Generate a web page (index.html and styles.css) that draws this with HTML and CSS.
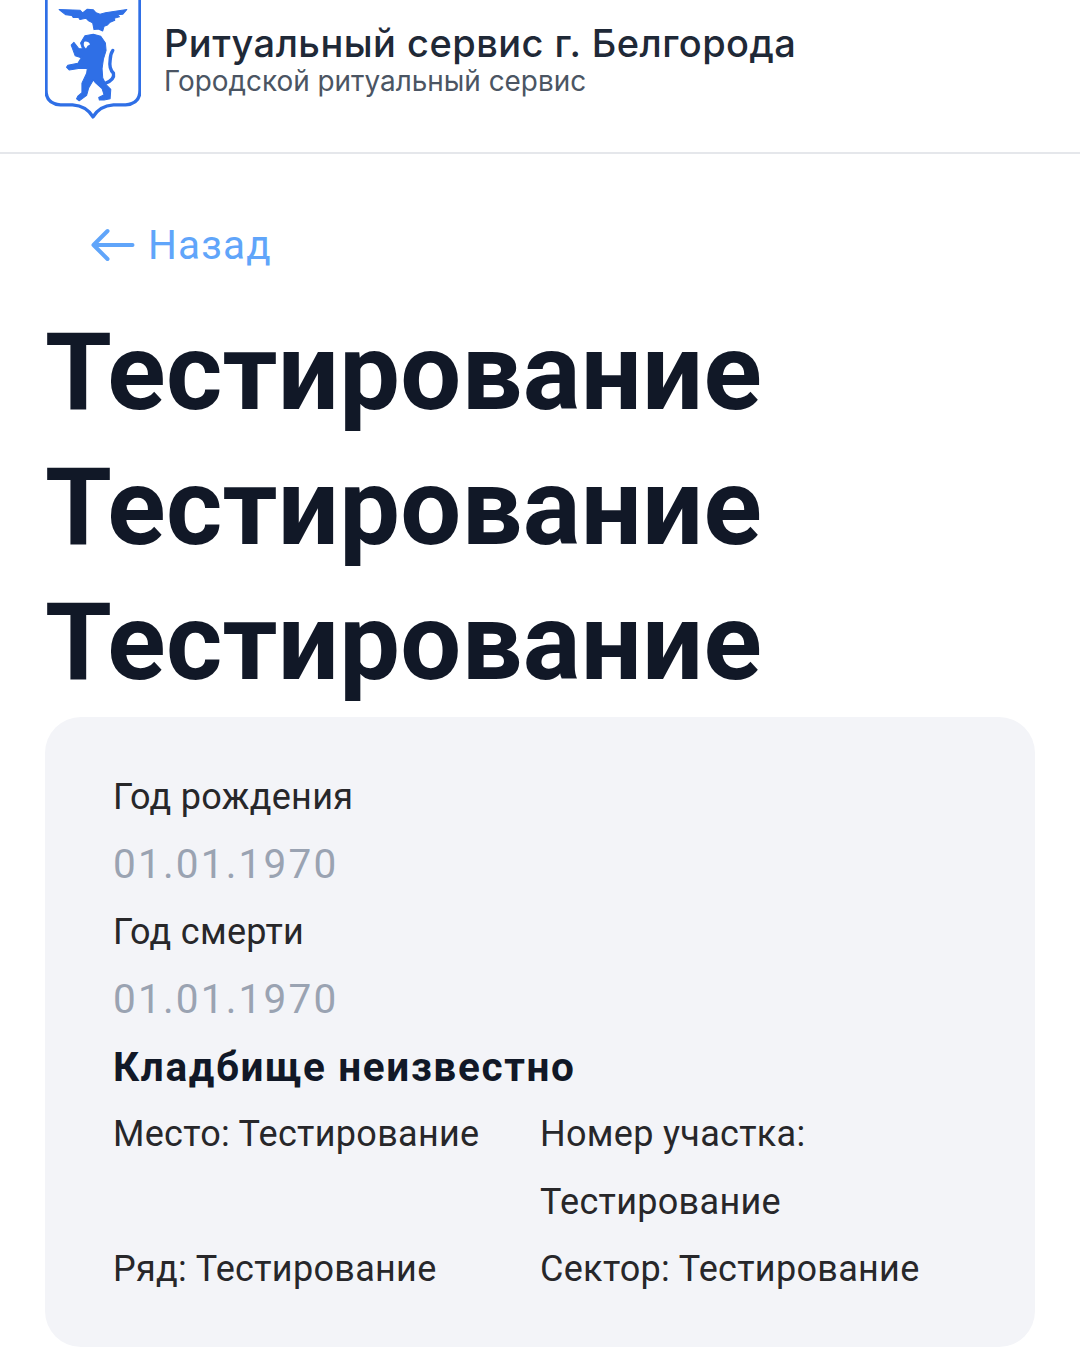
FILE: index.html
```html
<!DOCTYPE html>
<html lang="ru">
<head>
<meta charset="utf-8">
<title>Тестирование</title>
<link rel="stylesheet" href="styles.css">
</head>
<body>
<header class="header">
  <svg class="logo" viewBox="46 0 286 354" aria-hidden="true">
    <path class="shield" d="M49,-6 V268 Q49,310 92,312 H128 Q170,315 189,348 Q208,315 250,312 H286 Q329,310 329,268 V-6"/>
    <path class="mark" d="M88,28 L150,30 L158,38 L172,27 L190,29 L198,38 L210,42 L226,38 L290,28 L278,42 L262,44 L268,50 L252,54 L254,60 L240,66 L232,74 L222,78 L218,92 L205,86 L192,88 L188,68 L176,62 L168,54 L150,58 L146,52 L130,52 L126,46 L108,44 Z"/>
    <path class="mark" d="M165,106 L190,102 L212,108 L226,128 L228,150 L220,176 L216,204 L218,232 L228,252 L242,266 L240,294 L222,298 L208,298 L206,290 L222,282 L216,264 L196,246 L190,238 L176,262 L170,284 L148,300 L140,294 L144,286 L156,276 L156,248 L170,218 L172,204 L146,204 L118,208 L110,200 L114,194 L144,188 L154,172 L136,166 L124,134 L132,126 L146,144 L158,146 L152,128 Z"/>
    <path class="tail" d="M226,248 Q254,236 250,218 Q236,204 240,180 Q240,162 248,150"/>
    <path class="eye" d="M163,124 Q176,122 180,132 Q172,134 168,144 Q158,136 163,124 Z"/>
  </svg>
  <div class="brand">
    <div class="brand-title">Ритуальный сервис г. Белгорода</div>
    <div class="brand-sub">Городской ритуальный сервис</div>
  </div>
</header>
<main class="main">
  <a class="back" href="#">
    <svg class="back-icon" viewBox="0 0 44 34" aria-hidden="true"><path d="M42,17 H3 M17,3 L3,17 L17,31"/></svg>
    <span>Назад</span>
  </a>
  <h1 class="title">Тестирование Тестирование Тестирование</h1>
  <section class="card">
    <div class="label">Год рождения</div>
    <div class="value">01.01.1970</div>
    <div class="label">Год смерти</div>
    <div class="value">01.01.1970</div>
    <div class="cemetery">Кладбище неизвестно</div>
    <div class="grid">
      <div class="label">Место: Тестирование</div>
      <div class="label">Номер участка: Тестирование</div>
      <div class="label">Ряд: Тестирование</div>
      <div class="label">Сектор: Тестирование</div>
    </div>
  </section>
</main>
</body>
</html>
```
FILE: styles.css
```css
* { box-sizing: border-box; }
html, body { margin: 0; background: #fff; }
body { font-family: Roboto, "Noto Sans", sans-serif; color: #111827; }

.header {
  height: 154px;
  border-bottom: 2px solid #e5e7eb;
  padding: 0 45px;
  display: flex;
  gap: 23px;
  align-items: flex-start;
  overflow: hidden;
}
.logo { width: 96px; height: 119px; flex: none; display: block; }
.shield { fill: #fff; stroke: #2f6fe6; stroke-width: 10; stroke-linejoin: round; }
.mark { fill: #2f6fe6; stroke: #2f6fe6; stroke-width: 3; stroke-linejoin: round; }
.tail { fill: none; stroke: #2f6fe6; stroke-width: 10; stroke-linecap: round; }
.eye { fill: #fff; }

.brand { padding-top: 18px; font-family: Inter, "Noto Sans", sans-serif; }
.brand-title { font-size: 38px; line-height: 50px; font-weight: 500; color: #1f2937; letter-spacing: 0.47px; white-space: nowrap; }
.brand-sub { font-size: 27.9px; line-height: 26px; color: #4b5563; white-space: nowrap; }

.main { padding: 0 45px; }
.back {
  display: flex;
  align-items: center;
  gap: 13px;
  margin: 66px 0 0 45px;
  height: 50px;
  font-size: 40.5px;
  letter-spacing: 1.2px;
  color: #60a5fa;
  text-decoration: none;
}
.back-icon { width: 45px; height: 34px; fill: none; stroke: #60a5fa; stroke-width: 4; stroke-linecap: round; stroke-linejoin: round; flex: none; }

.title {
  margin: 35px 0 7px;
  width: 800px;
  font-size: 108px;
  line-height: 135px;
  font-weight: 700;
  letter-spacing: 0.25px;
  color: #111827;
}

.card {
  background: #f3f4f8;
  border-radius: 36px;
  padding: 46.5px 68px 43.5px;
}
.label { font-size: 36px; line-height: 67.5px; letter-spacing: 0.3px; color: #27272a; }
.value { font-size: 40.5px; line-height: 67.5px; color: #9aa3b2; letter-spacing: 2.2px; }
.cemetery { font-size: 40.5px; line-height: 67.5px; font-weight: 700; letter-spacing: 1.65px; color: #111827; }
.grid { display: grid; grid-template-columns: 1fr 1fr; }
```
